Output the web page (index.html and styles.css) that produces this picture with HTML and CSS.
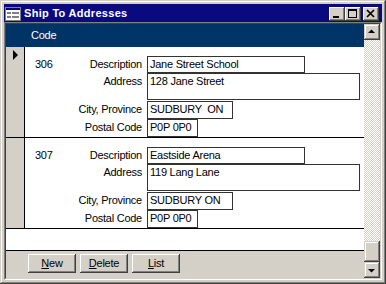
FILE: index.html
```html
<!DOCTYPE html>
<html lang="en">
<head>
    <meta charset="UTF-8">
    <meta name="viewport" content="width=device-width, initial-scale=1.0">
    <title>Ship To Addresses</title>
    <link rel="stylesheet" href="styles.css">
</head>
<body>
    <div class="window">
        <!-- title bar -->
        <div class="titlebar">
            <svg class="app-icon" width="16" height="14" viewBox="0 0 16 14">
                <rect x="0.5" y="0.5" width="15" height="13" fill="#fff" stroke="#808080"/>
                <rect x="1" y="1" width="14" height="2" fill="#000080"/>
                <rect x="2" y="5" width="4" height="2" fill="#808080"/>
                <rect x="7" y="5" width="7" height="2" fill="#808080"/>
                <rect x="2" y="9" width="4" height="2" fill="#808080"/>
                <rect x="7" y="9" width="7" height="2" fill="#808080"/>
            </svg>
            <span class="title">Ship To Addresses</span>
            <div class="caption-buttons">
                <div class="cap-btn">
                    <svg width="16" height="14" viewBox="0 0 16 14"><rect x="4" y="9" width="6" height="2" fill="#000"/></svg>
                </div>
                <div class="cap-btn">
                    <svg width="16" height="14" viewBox="0 0 16 14"><rect x="3.5" y="2.5" width="8" height="8" fill="none" stroke="#000"/><rect x="3" y="2" width="9" height="2" fill="#000"/></svg>
                </div>
                <div class="cap-btn close">
                    <svg width="16" height="14" viewBox="0 0 16 14"><path d="M4 3 L11 10 M11 3 L4 10" stroke="#000" stroke-width="1.7"/></svg>
                </div>
            </div>
        </div>

        <!-- client area -->
        <div class="client">
            <div class="client-inner">
                <div class="form">
                    <div class="header">Code</div>

                    <div class="record">
                        <div class="selector">
                            <svg width="6" height="10" viewBox="0 0 6 10"><path d="M0 0 L5 5 L0 10 Z" fill="#000"/></svg>
                        </div>
                        <div class="rec-body">
                            <div class="code">306</div>
                            <div class="fields">
                                <span class="label">Description</span><div class="box w-desc">Jane Street School</div>
                                <span class="label">Address</span><div class="box w-addr tall">128 Jane Street</div>
                                <span class="label">City, Province</span><div class="box w-city">SUDBURY  ON</div>
                                <span class="label">Postal Code</span><div class="box w-post">P0P 0P0</div>
                            </div>
                        </div>
                    </div>

                    <div class="record">
                        <div class="selector"></div>
                        <div class="rec-body">
                            <div class="code">307</div>
                            <div class="fields">
                                <span class="label">Description</span><div class="box w-desc">Eastside Arena</div>
                                <span class="label">Address</span><div class="box w-addr tall">119 Lang Lane</div>
                                <span class="label">City, Province</span><div class="box w-city">SUDBURY ON</div>
                                <span class="label">Postal Code</span><div class="box w-post">P0P 0P0</div>
                            </div>
                        </div>
                    </div>

                    <div class="blank"></div>

                    <div class="footer">
                        <div class="btn"><u>N</u>ew</div>
                        <div class="btn"><u>D</u>elete</div>
                        <div class="btn"><u>L</u>ist</div>
                    </div>
                </div>

                <!-- vertical scrollbar -->
                <div class="scrollbar">
                    <div class="sb-btn">
                        <svg width="16" height="16" viewBox="0 0 16 16"><path d="M4 9 L11 9 L7.5 5.5 Z" fill="#000"/></svg>
                    </div>
                    <div class="sb-track"></div>
                    <div class="sb-thumb"></div>
                    <div class="sb-btn">
                        <svg width="16" height="16" viewBox="0 0 16 16"><path d="M4 7 L11 7 L7.5 10.5 Z" fill="#000"/></svg>
                    </div>
                </div>
            </div>
        </div>
    </div>
</body>
</html>
```

FILE: styles.css
```css
body {
    margin: 0;
    background: #d4d0c8;
    font-family: "Liberation Sans", Arial, sans-serif;
    font-size: 11px;
    letter-spacing: -0.25px;
    color: #000;
}
.window {
    width: 386px;
    height: 284px;
    box-sizing: border-box;
    padding: 4px;
    background: #d4d0c8;
    box-shadow: inset -1px -1px #404040, inset 1px 1px #d4d0c8, inset -2px -2px #808080, inset 2px 2px #fff;
    display: flex;
    flex-direction: column;
}

/* title bar */
.titlebar {
    height: 18px;
    background: #0a0a80;
    display: flex;
    align-items: center;
    padding: 0 3px 0 1px;
}
.app-icon {
    display: block;
    margin-top: 1px;
}
.title {
    margin-left: 3px;
    color: #fff;
    font-weight: bold;
    letter-spacing: 0.3px;
}
.caption-buttons {
    margin-left: auto;
    display: flex;
    margin-top: 1px;
}
.cap-btn {
    width: 16px;
    height: 14px;
    background: #d4d0c8;
    box-shadow: inset -1px -1px #404040, inset 1px 1px #fff, inset -2px -2px #808080;
}
.cap-btn svg {
    display: block;
}
.cap-btn.close {
    margin-left: 2px;
}

/* sunken client frame */
.client {
    border: 1px solid;
    border-color: #808080 #fff #fff #808080;
}
.client-inner {
    border: 1px solid;
    border-color: #404040 #d4d0c8 #d4d0c8 #404040;
    height: 254px;
    display: flex;
}
.form {
    width: 358px;
    display: flex;
    flex-direction: column;
    background: #fff;
}
.header {
    height: 23px;
    background: #003366;
    color: #fff;
    line-height: 23px;
    padding-left: 25px;
}

/* records */
.record {
    height: 91px;
    box-sizing: border-box;
    display: flex;
    border-bottom: 1px solid #000;
}
.selector {
    width: 18px;
    background: #d4d0c8;
    border-right: 1px solid #000;
}
.selector svg {
    display: block;
    margin: 3px 0 0 7px;
}
.rec-body {
    flex: 1;
    display: flex;
    padding: 9px 0 0 10px;
}
.code {
    width: 40px;
    padding-top: 1px;
    line-height: 14px;
}
.fields {
    display: grid;
    grid-template-columns: 72px auto;
    align-items: start;
}
.label {
    text-align: right;
    padding-right: 5px;
    padding-top: 1px;
    line-height: 14px;
}
.box {
    height: 17px;
    box-sizing: border-box;
    border: 1px solid #333;
    padding-left: 2px;
    line-height: 14px;
    white-space: pre;
    margin-bottom: -1px;
}
.box.tall {
    height: 27px;
}
.w-desc { width: 158px; }
.w-addr { width: 213px; }
.w-city { width: 86px; height: 18px; }
.w-post { width: 51px; height: 18px; }

.blank {
    flex: 1;
}

/* footer with buttons */
.footer {
    height: 28px;
    box-sizing: border-box;
    border-top: 1px solid #000;
    background: #d4d0c8;
    display: flex;
    gap: 4px;
    padding: 3px 0 0 22px;
}
.btn {
    width: 48px;
    height: 19px;
    box-sizing: border-box;
    background: #d4d0c8;
    box-shadow: inset -1px -1px #404040, inset 1px 1px #fff, inset -2px -2px #808080;
    text-align: center;
    line-height: 19px;
}

/* scrollbar */
.scrollbar {
    width: 16px;
    display: flex;
    flex-direction: column;
}
.sb-btn, .sb-thumb {
    height: 16px;
    background: #d4d0c8;
    box-shadow: inset -1px -1px #404040, inset 1px 1px #d4d0c8, inset -2px -2px #808080, inset 2px 2px #fff;
}
.sb-btn svg {
    display: block;
}
.sb-thumb {
    height: 21px;
}
.sb-track {
    flex: 1;
    background: repeating-conic-gradient(#d4d0c8 0 25%, #fff 0 50%) 0 0 / 2px 2px;
}
```
